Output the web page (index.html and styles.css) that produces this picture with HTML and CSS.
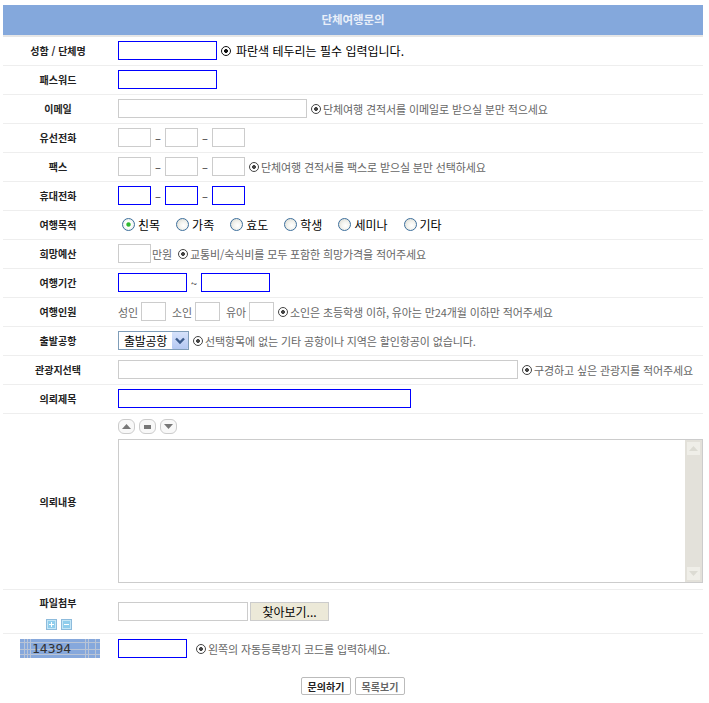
FILE: index.html
```html
<!DOCTYPE html>
<html lang="ko">
<head>
<meta charset="UTF-8">
<title>단체여행문의</title>
<link rel="stylesheet" href="styles.css">
</head>
<body>

<h2 class="title">단체여행문의</h2>
<form class="inquiry">
    <div class="row">
        <label class="label">성함 / 단체명</label>
        <input type="text" class="req w99">
        <span class="note note-first"><i class="mark"></i>파란색 테두리는 필수 입력입니다.</span>
    </div>
    <div class="row">
        <label class="label">패스워드</label>
        <input type="password" class="req w99">
    </div>
    <div class="row">
        <label class="label">이메일</label>
        <input type="text" class="w189">
        <span class="note"><i class="mark"></i>단체여행 견적서를 이메일로 받으실 분만 적으세요</span>
    </div>
    <div class="row">
        <label class="label">유선전화</label>
        <div class="phone">
            <input type="text" class="w33"><span>–</span><input type="text" class="w33"><span>–</span><input type="text" class="w33">
        </div>
    </div>
    <div class="row">
        <label class="label">팩스</label>
        <div class="phone">
            <input type="text" class="w33"><span>–</span><input type="text" class="w33"><span>–</span><input type="text" class="w33">
        </div>
        <span class="note"><i class="mark"></i>단체여행 견적서를 팩스로 받으실 분만 선택하세요</span>
    </div>
    <div class="row">
        <label class="label">휴대전화</label>
        <div class="phone">
            <input type="text" class="req w33"><span>–</span><input type="text" class="req w33"><span>–</span><input type="text" class="req w33">
        </div>
    </div>
    <div class="row">
        <label class="label">여행목적</label>
        <div class="purpose">
            <label><input type="radio" name="purpose" checked>친목</label>
            <label><input type="radio" name="purpose">가족</label>
            <label><input type="radio" name="purpose">효도</label>
            <label><input type="radio" name="purpose">학생</label>
            <label><input type="radio" name="purpose">세미나</label>
            <label><input type="radio" name="purpose">기타</label>
        </div>
    </div>
    <div class="row">
        <label class="label">희망예산</label>
        <input type="text" class="w33">
        <span class="unit">만원</span>
        <span class="note note-budget"><i class="mark"></i>교통비/숙식비를 모두 포함한 희망가격을 적어주세요</span>
    </div>
    <div class="row">
        <label class="label">여행기간</label>
        <input type="text" class="req w69">
        <span class="tilde">~</span>
        <input type="text" class="req w69">
    </div>
    <div class="row">
        <label class="label">여행인원</label>
        <div class="people">
            <span>성인</span><input type="text" class="w25">
            <span>소인</span><input type="text" class="w25">
            <span>유아</span><input type="text" class="w25">
        </div>
        <span class="note"><i class="mark"></i>소인은 초등학생 이하, 유아는 만24개월 이하만 적어주세요</span>
    </div>
    <div class="row">
        <label class="label">출발공항</label>
        <div class="select-box">
            <select><option>출발공항</option></select>
            <svg class="select-arrow" width="16" height="16" viewBox="0 0 16 16">
                <path d="M4 6l4 4 4-4" fill="none" stroke="#3b5b8c" stroke-width="2.4"/>
            </svg>
        </div>
        <span class="note"><i class="mark"></i>선택항목에 없는 기타 공항이나 지역은 할인항공이 없습니다.</span>
    </div>
    <div class="row">
        <label class="label">관광지선택</label>
        <input type="text" class="w400">
        <span class="note"><i class="mark"></i>구경하고 싶은 관광지를 적어주세요</span>
    </div>
    <div class="row">
        <label class="label">의뢰제목</label>
        <input type="text" class="req w293">
    </div>
    <div class="row row-content">
        <label class="label">의뢰내용</label>
        <div class="content">
            <div class="sizer">
                <button type="button"><svg width="9" height="5" viewBox="0 0 9 5"><path d="M4.5 0L9 5H0z"/></svg></button>
                <button type="button"><svg width="7" height="4" viewBox="0 0 7 4"><path d="M0 0h7v4H0z"/></svg></button>
                <button type="button"><svg width="9" height="5" viewBox="0 0 9 5"><path d="M0 0h9L4.5 5z"/></svg></button>
            </div>
            <div class="textarea-box">
                <textarea></textarea>
                <div class="scrollbar">
                    <span class="scroll-btn"><svg width="9" height="5" viewBox="0 0 9 5"><path d="M4.5 0L9 5H0z"/></svg></span>
                    <span class="scroll-btn"><svg width="9" height="5" viewBox="0 0 9 5"><path d="M0 0h9L4.5 5z"/></svg></span>
                </div>
            </div>
        </div>
    </div>
    <div class="row row-file">
        <div class="label">
            <label>파일첨부</label>
            <div class="file-btns">
                <svg width="11" height="11" viewBox="0 0 11 11">
                    <rect x="0.5" y="0.5" width="10" height="10" fill="#8fcdec" stroke="#8dbbdc"/>
                    <rect x="1.5" y="1.5" width="8" height="8" fill="none" stroke="#c4e6f6"/>
                    <path d="M5.5 3v5M3 5.5h5" stroke="#fff"/>
                </svg>
                <svg width="11" height="11" viewBox="0 0 11 11">
                    <rect x="0.5" y="0.5" width="10" height="10" fill="#8fcdec" stroke="#8dbbdc"/>
                    <rect x="1.5" y="1.5" width="8" height="8" fill="none" stroke="#c4e6f6"/>
                    <path d="M3 5.5h5" stroke="#fff"/>
                </svg>
            </div>
        </div>
        <input type="text" class="w130">
        <button type="button" class="browse">찾아보기...</button>
    </div>
    <div class="row row-code">
        <div class="label"><span class="captcha">14394</span></div>
        <input type="text" class="req w69">
        <span class="note note-code"><i class="mark"></i>왼쪽의 자동등록방지 코드를 입력하세요.</span>
    </div>
    <div class="actions">
        <button type="button" class="send">문의하기</button>
        <button type="button" class="list">목록보기</button>
    </div>
</form>

</body>
</html>
```

FILE: styles.css
```css
body {
    font-family: "Noto Sans CJK KR", "Liberation Sans", sans-serif;
    font-size: 11px;
    letter-spacing: -0.12px;
    margin: 0;
    padding: 5px 6px 0 3px;
    background-color: #fff;
    color: #666;
}

.title {
    margin: 0;
    height: 30px;
    line-height: 29px;
    font-size: 11.5px;
    text-align: center;
    color: #e9eff9;
    background-color: #84a8dc;
    border-bottom: 2px solid #e6e6e6;
}

.row {
    display: flex;
    align-items: center;
    height: 27px;
    padding-bottom: 1px;
    border-bottom: 1px solid #eee;
}

.label {
    flex: none;
    width: 110px;
    margin-right: 5px;
    text-align: center;
    font-size: 10px;
    font-weight: bold;
    letter-spacing: 0;
    color: #222;
}

input[type="text"],
input[type="password"] {
    box-sizing: border-box;
    height: 19px;
    padding: 0 2px;
    border: 1px solid #ccc;
    background-color: #fff;
    flex: none;
}

input.req {
    border-color: #00f;
}

.w25 { width: 25px; }
.w33 { width: 33px; }
.w69 { width: 69px; }
.w99 { width: 99px; }
.w130 { width: 130px; }
.w189 { width: 189px; }
.w293 { width: 293px; }
.w400 { width: 400px; }

.note {
    display: flex;
    align-items: center;
    margin-left: 4px;
}

.note-first {
    color: #000;
    font-size: 12px;
    letter-spacing: 0;
}

.note-budget { margin-left: 6px; }
.note-code { margin-left: 9px; }

.mark {
    flex: none;
    box-sizing: border-box;
    width: 10px;
    height: 10px;
    margin-right: 2px;
    border: 1px solid #444;
    border-radius: 50%;
    background: radial-gradient(circle, #444 0, #444 1.6px, #fff 2.2px);
}

.note-first .mark {
    margin-right: 5px;
    border-color: #111;
    background: radial-gradient(circle, #111 0, #111 1.6px, #fff 2.2px);
}

.phone {
    display: flex;
    align-items: center;
    gap: 5px;
    color: #222;
}

.phone span {
    width: 4px;
    display: flex;
    justify-content: center;
}

.purpose {
    display: flex;
    align-items: center;
    gap: 15px;
    margin-left: 3px;
    font-size: 12px;
    letter-spacing: 0;
    color: #000;
}

.purpose label {
    display: flex;
    align-items: center;
}

input[type="radio"] {
    appearance: none;
    box-sizing: border-box;
    width: 13px;
    height: 13px;
    margin: 0 3px 0 1px;
    border: 1px solid #3d6f9c;
    border-radius: 50%;
    background: radial-gradient(circle at 60% 60%, #fff 0, #f4f4ef 40%, #d5d5cd 100%);
}

input[type="radio"]:checked {
    background: radial-gradient(circle, #2fb82f 0, #2fb82f 1.6px, #fff 2.8px, #dfe6dc 100%);
}

.unit {
    margin-left: 1px;
}

.tilde {
    width: 14px;
    text-align: center;
    color: #222;
}

.people {
    display: flex;
    align-items: center;
}

.people span {
    width: 23px;
}

.people input {
    margin-right: 6px;
}

.people input:last-child {
    margin-right: 0;
}

.select-box {
    position: relative;
    flex: none;
    height: 19px;
}

select {
    appearance: none;
    box-sizing: border-box;
    display: block;
    width: 71px;
    height: 19px;
    padding: 0 0 2px 5px;
    border: 1px solid #7f9db9;
    border-radius: 0;
    background-color: #fff;
    font-family: inherit;
    font-size: 12px;
    letter-spacing: -0.3px;
    color: #000;
}

.select-arrow {
    position: absolute;
    top: 1px;
    right: 1px;
    width: 16px;
    height: 17px;
    border-radius: 1px;
    background: linear-gradient(#d6e2fb, #b4c8f2);
    pointer-events: none;
}

.row-content {
    height: 175px;
    padding-bottom: 0;
}

.content {
    flex: 1;
    align-self: flex-start;
}

.sizer {
    display: flex;
    gap: 4px;
    margin-top: 5px;
    height: 15px;
}

.sizer button {
    display: flex;
    align-items: center;
    justify-content: center;
    box-sizing: border-box;
    width: 17px;
    height: 15px;
    padding: 0;
    border: 1px solid #ccc;
    border-radius: 6px;
    background-color: #f8f8f8;
}

.sizer svg {
    fill: #777;
}

.textarea-box {
    display: flex;
    box-sizing: border-box;
    height: 144px;
    margin-top: 5px;
    border: 1px solid #ccc;
}

textarea {
    flex: 1;
    margin: 0;
    padding: 0;
    border: none;
    outline: none;
    resize: none;
}

.scrollbar {
    display: flex;
    flex-direction: column;
    justify-content: space-between;
    box-sizing: border-box;
    width: 17px;
    padding: 2px;
    background-color: #e3e1da;
}

.scroll-btn {
    display: flex;
    align-items: center;
    justify-content: center;
    width: 13px;
    height: 13px;
    background-color: #efeee8;
}

.scroll-btn svg {
    fill: #dcdbd3;
}

.row-file {
    height: 43px;
    padding-bottom: 0;
}

.row-file .label {
    margin-top: 1px;
}

.file-btns {
    display: flex;
    justify-content: center;
    gap: 4px;
    margin: 9px 0 0 1px;
    height: 11px;
}

.browse {
    box-sizing: border-box;
    width: 79px;
    height: 19px;
    margin-left: 2px;
    padding: 0;
    border: 1px solid #ccc;
    background-color: #ece9d8;
    font-family: inherit;
    font-size: 12px;
    color: #000;
}

.row-code {
    border-bottom: none;
    height: 29px;
}

/* plaid lines sit at uneven spots like the generated code image */
.captcha {
    display: block;
    box-sizing: border-box;
    width: 80px;
    height: 19px;
    margin-left: 17px;
    padding-left: 12px;
    line-height: 19px;
    text-align: left;
    font-family: "DejaVu Sans Mono", monospace;
    font-size: 13px;
    font-weight: normal;
    color: #333;
    background-color: #86a8dc;
    background-image:
        linear-gradient(#b9c4d6, #b9c4d6), linear-gradient(#b9c4d6, #b9c4d6),
        linear-gradient(#b9c4d6, #b9c4d6), linear-gradient(#b9c4d6, #b9c4d6),
        linear-gradient(#b9c4d6, #b9c4d6), linear-gradient(#b9c4d6, #b9c4d6),
        linear-gradient(#b9c4d6, #b9c4d6), linear-gradient(#b9c4d6, #b9c4d6),
        linear-gradient(#b9c4d6, #b9c4d6);
    background-repeat: no-repeat;
    background-size: 1px 100%, 1px 100%, 1px 100%, 1px 100%, 1px 100%, 1px 100%, 100% 1px, 100% 1px, 100% 1px;
    background-position: 4px 0, 7px 0, 10px 0, 65px 0, 68px 0, 75px 0, 0 3px, 0 10px, 0 15px;
}

.actions {
    display: flex;
    justify-content: center;
    gap: 4px;
    margin-top: 13px;
}

.actions button {
    box-sizing: border-box;
    width: 50px;
    height: 18px;
    padding: 0;
    border: 1px solid #bbb;
    border-radius: 2px;
    background-color: #fff;
    font-family: inherit;
    font-size: 10px;
    font-weight: bold;
    color: #222;
}

.actions .list {
    color: #666;
}
```
